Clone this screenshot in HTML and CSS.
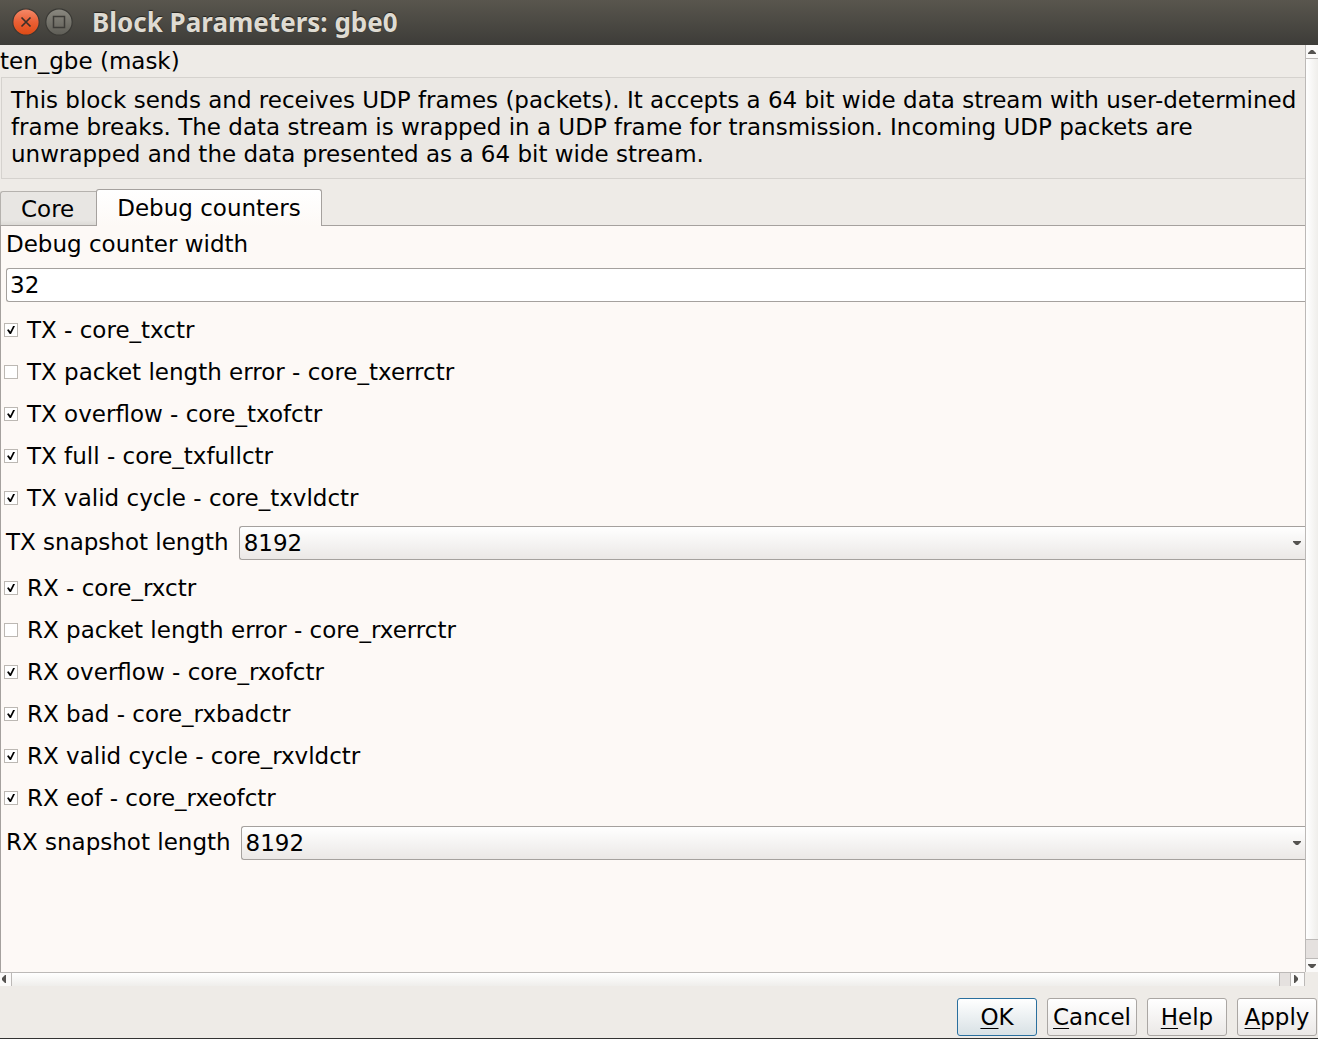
FILE: index.html
```html
<!DOCTYPE html>
<html lang="en">
<head>
<meta charset="utf-8">
<meta name="viewport" content="width=device-width, initial-scale=1">
<title>Block Parameters: gbe0</title>
<link rel="stylesheet" href="styles.css">
</head>
<body>
<header class="titlebar">
  <button class="win-btn" type="button" aria-label="Close">
    <svg width="28" height="28" viewBox="0 0 28 28">
      <defs>
        <linearGradient id="g-close" x1="0" y1="0" x2="0" y2="1"><stop offset="0" stop-color="#f58b6b"/><stop offset=".5" stop-color="#ea5f35"/><stop offset="1" stop-color="#dd4a14"/></linearGradient>
        <linearGradient id="g-max" x1="0" y1="0" x2="0" y2="1"><stop offset="0" stop-color="#8b8980"/><stop offset="1" stop-color="#5e5d56"/></linearGradient>
      </defs>
      <circle cx="14" cy="14" r="13.2" fill="url(#g-close)" stroke="#3a3935" stroke-width="1.2"/>
      <path d="M9.500 9.500l9 9M18.500 9.500l-9 9" stroke="#3c2f28" stroke-width="1.700" fill="none"/>
    </svg>
  </button>
  <button class="win-btn" type="button" aria-label="Maximize">
    <svg width="28" height="28" viewBox="0 0 28 28">
      <circle cx="14" cy="14" r="13.2" fill="url(#g-max)" stroke="#3a3935" stroke-width="1.2"/>
      <rect x="8.500" y="8.500" width="11" height="11" stroke="#3c3b37" stroke-width="1.500" fill="none"/>
    </svg>
  </button>
  <h1 class="title">Block Parameters: gbe0</h1>
</header>
<main class="scroll-area">
  <div class="view">
    <p class="mask-name">ten_gbe (mask)</p>
    <p class="description">This block sends and receives UDP frames (packets). It accepts a 64 bit wide data stream with user-determined frame breaks. The data stream is wrapped in a UDP frame for transmission. Incoming UDP packets are unwrapped and the data presented as a 64 bit wide stream.</p>
    <div class="tabs" role="tablist">
      <button class="tab" type="button" role="tab" aria-selected="false">Core</button>
      <button class="tab tab-active" type="button" role="tab" aria-selected="true">Debug counters</button>
    </div>
    <form class="panel" id="params">
      <label class="field-label" for="width">Debug counter width</label>
      <input class="field" id="width" type="text" value="32">
      <label class="check"><input type="checkbox" checked>TX - core_txctr</label>
      <label class="check"><input type="checkbox">TX packet length error - core_txerrctr</label>
      <label class="check"><input type="checkbox" checked>TX overflow - core_txofctr</label>
      <label class="check"><input type="checkbox" checked>TX full - core_txfullctr</label>
      <label class="check"><input type="checkbox" checked>TX valid cycle - core_txvldctr</label>
      <div class="select-row">
        <label for="tx-snap">TX snapshot length</label>
        <select class="select" id="tx-snap"><option>8192</option></select>
      </div>
      <label class="check"><input type="checkbox" checked>RX - core_rxctr</label>
      <label class="check"><input type="checkbox">RX packet length error - core_rxerrctr</label>
      <label class="check"><input type="checkbox" checked>RX overflow - core_rxofctr</label>
      <label class="check"><input type="checkbox" checked>RX bad - core_rxbadctr</label>
      <label class="check"><input type="checkbox" checked>RX valid cycle - core_rxvldctr</label>
      <label class="check"><input type="checkbox" checked>RX eof - core_rxeofctr</label>
      <div class="select-row">
        <label for="rx-snap">RX snapshot length</label>
        <select class="select" id="rx-snap"><option>8192</option></select>
      </div>
    </form>
  </div>
  <div class="vbar">
    <button class="arrow" type="button" aria-label="Scroll up"><svg width="8" height="4" viewBox="0 0 8 4"><path d="M0 4V3L3 0h2l3 3v1z"/></svg></button>
    <div class="vthumb"></div>
    <div class="vtrack"></div>
    <button class="arrow" type="button" aria-label="Scroll down"><svg width="8" height="4" viewBox="0 0 8 4"><path d="M0 0v1l3 3h2l3-3V0z"/></svg></button>
  </div>
  <div class="hbar">
    <button class="arrow" type="button" aria-label="Scroll left"><svg width="4" height="8" viewBox="0 0 4 8"><path d="M4 0H3L0 3v2l3 3h1z"/></svg></button>
    <div class="hthumb"></div>
    <div class="htrack"></div>
    <button class="arrow" type="button" aria-label="Scroll right"><svg width="4" height="8" viewBox="0 0 4 8"><path d="M0 0h1l3 3v2L1 8H0z"/></svg></button>
  </div>
</main>
<footer class="actions">
  <button class="btn btn-default" type="submit" form="params"><span class="key">O</span>K</button>
  <button class="btn btn-wide" type="button"><span class="key">C</span>ancel</button>
  <button class="btn" type="button"><span class="key">H</span>elp</button>
  <button class="btn" type="button"><span class="key">A</span>pply</button>
</footer>
</body>
</html>
```
FILE: styles.css
```css
* {
  box-sizing: border-box;
}

body {
  margin: 0;
  min-height: 100vh;
  display: flex;
  flex-direction: column;
  background: #eeebe7;
  color: #000;
  font: 23px/27px "DejaVu Sans", sans-serif;
  border-bottom: 1px solid #333;
}

button,
input,
select {
  font: inherit;
  color: inherit;
  margin: 0;
}

.titlebar {
  display: flex;
  align-items: center;
  gap: 5px;
  height: 45px;
  padding: 0 12px 2px;
  background: linear-gradient(#59564e, #3d3c38);
}

.win-btn {
  display: flex;
  width: 28px;
  height: 28px;
  padding: 0;
  border: 0;
  background: none;
}

.title {
  margin: 0 0 0 14px;
  font: bold 26px/28px "Noto Sans", sans-serif;
  color: #dfdbd2;
  text-shadow: 0 -1px 1px #24231f;
}

.scroll-area {
  flex: 1;
  display: grid;
  grid-template-columns: minmax(0, 1fr) 13px;
  grid-template-rows: 1fr 14px;
}

.view {
  display: flex;
  flex-direction: column;
}

.mask-name {
  margin: 0;
  padding: 3px 0 2px;
}

.description {
  margin: 0 0 10px 1px;
  padding: 9px 0 10px 9px;
  border: 1px solid #d5d2ce;
  border-right: 0;
  background: #ebe8e4;
}

.tabs {
  display: flex;
  align-items: flex-end;
  height: 37px;
  border-bottom: 1px solid #a5a19e;
}

.tab {
  height: 34px;
  padding: 2px 22px 0 20px;
  border: 1px solid #b5b2ae;
  border-width: 1px 0 0 1px;
  border-radius: 3px 0 0 0;
  background: linear-gradient(#e8e6e3 85%, #dcdad6);
}

.tab-active {
  height: 37px;
  margin-bottom: -1px;
  padding: 0 20px;
  border: 1px solid #a5a19e;
  border-bottom: 0;
  border-radius: 3px 3px 0 0;
  background: linear-gradient(#fff, #fdf9f6);
}

.panel {
  flex: 1;
  display: flex;
  flex-direction: column;
  border-left: 1px solid #a5a19e;
  background: #fdf9f6;
}

.field-label {
  padding: 5px 5px 10px;
}

.field {
  height: 34px;
  margin: 0 0 7px 5px;
  padding: 0 3px;
  border: 1px solid #a5a19e;
  border-right: 0;
  border-radius: 3px 0 0 3px;
  background: #fff;
}

.check {
  display: flex;
  align-items: center;
  gap: 9px;
  height: 42px;
  padding-left: 3px;
}

.check input {
  appearance: none;
  display: grid;
  place-items: center;
  width: 14px;
  height: 14px;
  border: 1px solid #bcb8b3;
  background: #fff;
}

.check input:checked::before {
  content: "";
  width: 8px;
  height: 8px;
  background: #000;
  clip-path: polygon(0 50%, 20% 40%, 42% 68%, 76% 0, 100% 0, 50% 100%, 34% 100%);
}

.select-row {
  display: flex;
  gap: 10px;
  margin: 7px 0;
  padding-left: 5px;
}

.select-row label {
  padding-top: 3px;
}

.select {
  appearance: none;
  flex: 1;
  min-width: 0;
  height: 34px;
  padding: 0 16px 0 4px;
  border: 1px solid #a5a19e;
  border-right: 0;
  border-radius: 3px 0 0 3px;
  background:
    url("data:image/svg+xml,%3Csvg xmlns='http://www.w3.org/2000/svg' width='8' height='4'%3E%3Cpath d='M0 0h8v1L5 4H3L0 1z' fill='%23555350'/%3E%3C/svg%3E") no-repeat right 4px center,
    linear-gradient(#fff, #ebe8e6);
}

.vbar,
.hbar {
  display: flex;
  background: #e5e1df;
}

.vbar {
  flex-direction: column;
  border-left: 1px solid #bcb9b7;
}

.hbar {
  border-top: 1px solid #bcb9b7;
  border-right: 1px solid #bcb9b7;
}

.arrow {
  display: grid;
  place-items: center;
  flex: none;
  padding: 0;
  border: 0;
  background: #fbfaf9;
}

.arrow path {
  fill: #555350;
}

.vbar .arrow {
  width: 12px;
  height: 13px;
}

.hbar .arrow {
  width: 11px;
  height: 13px;
  padding: 0 3px 1px 0;
}

.hbar .arrow:last-child {
  width: 13px;
}

.vthumb {
  flex: 1;
  border: 1px solid #bcb9b7;
  border-width: 1px 0;
  background: linear-gradient(to right, #fff, #efeeeb);
}

.vtrack {
  height: 19px;
  border-bottom: 1px solid #bcb9b7;
}

.hthumb {
  flex: 1;
  border: 1px solid #bcb9b7;
  border-width: 0 1px;
  background: linear-gradient(#fff, #efeeeb);
}

.htrack {
  width: 11px;
  border-right: 1px solid #bcb9b7;
}

.actions {
  display: flex;
  justify-content: flex-end;
  gap: 10px;
  padding: 12px 1px 2px;
}

.btn {
  width: 80px;
  height: 38px;
  padding: 0;
  border: 1px solid #aaa6a3;
  border-radius: 3px;
  background: linear-gradient(#fff, #ebe8e6);
}

.btn-wide {
  width: 90px;
}

.btn-default {
  border-color: #2a6f9e;
  background: linear-gradient(#fff, #d8e1e5);
}

.key {
  text-decoration: underline;
  text-decoration-thickness: 1px;
  text-underline-offset: 3px;
}
```
